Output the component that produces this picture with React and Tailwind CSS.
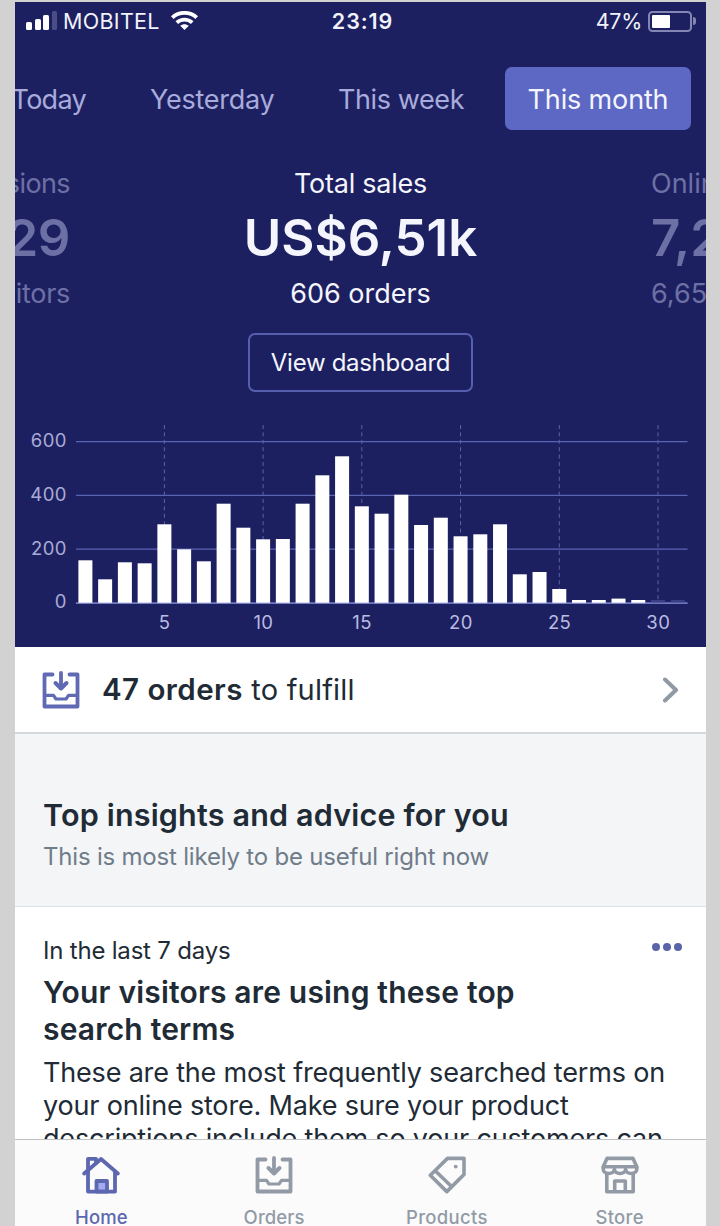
const bars = [
  560.3, 579.3, 562.3, 563.3, 524.3, 549.3, 561.3, 503.7, 527.7, 539.3, 539, 503.7, 475.3, 456.3, 506.3, 513.7,
  494.7, 525, 517.7, 536.3, 534.3, 524.3, 574.3, 572, 589, 600, 600, 598.6, 600, 600, 600,
];
const yTicks = [
  ["600", 441.6],
  ["400", 495.3],
  ["200", 549.2],
  ["0", 603],
];
const xTicks = [5, 10, 15, 20, 25, 30];
const centerX = (day) => 85.4 + (day - 1) * 19.745;

function Chart() {
  return (
    <svg className="mt-[8px] block h-[247px] w-[691px]" viewBox="15 400 691 247">
      {xTicks.map((d) => (
        <line key={d} x1={centerX(d)} x2={centerX(d)} y1="425" y2="603" stroke="#5a62ad" strokeWidth="1" strokeDasharray="4 3.4" />
      ))}
      {yTicks.map(([label, y]) => (
        <g key={label}>
          <line x1="76" x2="687.5" y1={y} y2={y} stroke="#5a64b4" strokeWidth="1.3" />
          <text x="67" y={y + 5.4} textAnchor="end" fill="#a9abd6" fontSize="18.5" letterSpacing="0.5">
            {label}
          </text>
        </g>
      ))}
      {bars.map((top, i) => (
        <rect key={i} x={centerX(i + 1) - 7} y={top} width="14" height={603.2 - top} fill={i > 28 ? "#3a3f87" : "#ffffff"} />
      ))}
      <line x1="76" x2="687.5" y1="603.2" y2="603.2" stroke="#8088cc" strokeWidth="1" />
      {xTicks.map((d) => (
        <text key={d} x={centerX(d) + 0.3} y="629" textAnchor="middle" fill="#b9bbe0" fontSize="18.5" letterSpacing="0.4">
          {d}
        </text>
      ))}
    </svg>
  );
}

function InboxIcon({ className }) {
  return (
    <svg className={className} viewBox="0 0 38 38" fill="none" stroke="currentColor" strokeWidth="3.8" strokeLinejoin="round" strokeLinecap="round">
      <path d="M10.5 3.5H2.5V35.5H35.5V3.5H27.5" />
      <path d="M2.5 24.3H11.5L14 28H24L26.5 24.3H35.5" strokeWidth="3.2" />
      <path d="M19 2V17" />
      <path d="M13.5 12L19 17.5L24.5 12" strokeWidth="4" />
    </svg>
  );
}

function HomeIcon() {
  return (
    <svg className="h-[38px] w-[38px]" viewBox="0 0 38 38" fill="none" stroke="currentColor" strokeWidth="3.8" strokeLinejoin="round" strokeLinecap="round">
      <path d="M6 16.5V2.8H14V7" />
      <path d="M2.2 17.5L19 3L35.8 17.5" />
      <path d="M6 15.5V35.6H33V15.5" />
      <path d="M14.5 35.5V25H25V35.5Z" fill="#a3aaf0" />
    </svg>
  );
}

function TagIcon() {
  return (
    <svg className="h-[38px] w-[38px]" viewBox="0 0 38 38" fill="none" stroke="currentColor" strokeWidth="3.6" strokeLinejoin="round">
      <path d="M19.5 2.4H36V18.5L18.8 35.6L2.3 19.3Z" />
      <path d="M7.2 14.7L23.8 30.7" />
      <circle cx="27.7" cy="10.6" r="1.9" fill="currentColor" stroke="none" />
    </svg>
  );
}

function StoreIcon() {
  return (
    <svg className="h-[38px] w-[38px]" viewBox="0 0 38 38" fill="none" stroke="currentColor" strokeWidth="3.6" strokeLinejoin="round">
      <path d="M6 2.4H32L35.8 10.8H2.2Z" />
      <path d="M2.2 10.8V13C2.2 19 13.4 19 13.4 13C13.4 19 24.6 19 24.6 13C24.6 19 35.8 19 35.8 13V10.8" />
      <path d="M5.8 17V35.8H32.2V17" />
      <path d="M13.7 35.8V25H24.3V35.8" />
    </svg>
  );
}

function WifiIcon() {
  return (
    <svg className="-mt-[2px] h-[19px] w-[27px]" viewBox="0 0 27 19" fill="none" stroke="#fff" strokeWidth="3.9">
      <path d="M1.3 6.6C8.2 .3 18.8 .3 25.7 6.6" />
      <path d="M5.8 11.6C10.2 7.6 16.8 7.6 21.2 11.6" />
      <path d="M13.5 19L9.2 14.8C11.7 12.7 15.3 12.7 17.8 14.8Z" fill="#fff" stroke="none" />
    </svg>
  );
}

function StatusBar() {
  return (
    <div className="grid h-[39px] grid-cols-[1fr_auto_1fr] items-center text-[21.5px] leading-none text-[#f1f2fa]">
      <div className="flex items-center pl-[11px]">
        <div className="-mt-[2px] flex h-[19px] items-end gap-[2.5px]">
          <i className="h-[8px] w-[6px] rounded-[1.5px] bg-white" />
          <i className="h-[11px] w-[6px] rounded-[1.5px] bg-white" />
          <i className="h-[15px] w-[6px] rounded-[1.5px] bg-white" />
          <i className="h-[19px] w-[5px] rounded-[1.5px] bg-[#4b4e85]" />
        </div>
        <span className="ml-[6.5px] mr-[11px] tracking-[0.3px]">MOBITEL</span>
        <WifiIcon />
      </div>
      <span className="pl-[4px] font-semibold tracking-[0.9px]">23:19</span>
      <div className="flex items-center justify-end pr-[10px]">
        <span className="mr-[6px] tracking-[-0.3px]">47%</span>
        <div className="-mt-[1px] h-[21px] w-[44px] rounded-[4.5px] border-2 border-[#8386b4] p-[2px]">
          <div className="h-full w-[18px] rounded-[1px] bg-white" />
        </div>
        <i className="-mt-[1px] ml-[1px] h-[8px] w-[3px] rounded-r-full bg-[#8386b4]" />
      </div>
    </div>
  );
}

function NavItem({ label, active, children, className }) {
  return (
    <div className={"flex flex-col items-center pt-[16px] " + (active ? "text-[#5c67b0]" : "text-[#929ba5]")}>
      {children}
      <span className={"mt-[12px] text-[18.5px] font-medium leading-[22px] " + className}>{label}</span>
    </div>
  );
}

export default function App() {
  return (
    <div className="h-[1226px] w-[720px] overflow-hidden bg-[#d2d2d2] pl-[15px] pt-[2px] font-['Inter',sans-serif]">
      <main className="flex h-[1224px] w-[691px] flex-col overflow-hidden bg-white">
        <section className="h-[645px] shrink-0 overflow-hidden bg-[#1d2060]">
          <StatusBar />
          <nav className="mt-[26px] grid h-[63px] grid-cols-[71px_252px_167px_186px] items-center whitespace-nowrap text-[27px] text-[#a8abdb]">
            <span className="flex justify-end pt-[3px] tracking-[-0.7px]">Today</span>
            <span className="pl-[64px] pt-[3px] tracking-[-0.25px]">Yesterday</span>
            <span className="pt-[3px] tracking-[-0.4px]">This week</span>
            <span className="flex h-[63px] items-center justify-center rounded-[7px] bg-[#5c68c3] pt-[3px] tracking-[-0.15px] text-[#f4f5fd]">This month</span>
          </nav>
          <div className="mt-[35px] grid grid-cols-[55px_1fr_55px] whitespace-nowrap text-[27px] text-[#f4f5fd]">
            <div className="flex flex-col items-end text-[#6d70a5]">
              <span className="leading-[38px] tracking-[-0.6px]">Sessions</span>
              <span className="text-[51px] font-semibold leading-[69px] tracking-[-0.5px]">8,629</span>
              <span className="leading-[43px] tracking-[-0.3px]">visitors</span>
            </div>
            <div className="flex flex-col items-center">
              <span className="leading-[38px] tracking-[-0.25px]">Total sales</span>
              <span className="text-[51px] font-semibold leading-[69px]">US$6,51k</span>
              <span className="leading-[43px]">606 orders</span>
              <button className="mt-[18px] h-[59px] w-[225px] rounded-[7px] border-2 border-[#555fae] text-[24px] tracking-[-0.3px]">View dashboard</button>
            </div>
            <div className="flex flex-col items-start text-[#6d70a5]">
              <span className="leading-[38px]">Online store</span>
              <span className="text-[51px] font-semibold leading-[69px]">7,25</span>
              <span className="leading-[43px]">6,65</span>
            </div>
          </div>
          <Chart />
        </section>
        <section className="flex h-[85px] shrink-0 items-center pl-[27px] pr-[27px] text-[29px] text-[#212b36]">
          <InboxIcon className="h-[38px] w-[38px] text-[#6069b3]" />
          <p className="ml-[22px] flex-1 tracking-[0.2px]">
            <b className="text-[29.5px] font-semibold tracking-[0.45px]">47 orders</b> to fulfill
          </p>
          <svg className="h-[26px] w-[17px]" viewBox="0 0 17 26" fill="none" stroke="#919aa3" strokeWidth="4" strokeLinecap="round" strokeLinejoin="round">
            <path d="M3 2.5L14 13L3 23.5" />
          </svg>
        </section>
        <section className="h-[175px] shrink-0 border-b border-t-2 border-b-[#dde0e4] border-t-[#d5d8dc] bg-[#f3f5f7] pl-[28px] pt-[61px]">
          <h2 className="text-[30.5px] font-semibold leading-[40px] tracking-[0.18px] text-[#212b36]">Top insights and advice for you</h2>
          <p className="mt-[2px] text-[24px] leading-[40px] tracking-[-0.2px] text-[#6f7c89]">This is most likely to be useful right now</p>
        </section>
        <section className="h-[232px] shrink-0 overflow-hidden whitespace-nowrap pl-[28px] pr-[24px] pt-[27px] text-[#212b36]">
          <div className="flex h-[34px] justify-between">
            <span className="text-[24px] leading-[34px] tracking-[-0.2px]">In the last 7 days</span>
            <svg className="mt-[9px] h-[8px] w-[30px]" viewBox="0 0 30 8" fill="#5a65a8">
              <circle cx="4" cy="4" r="4" />
              <circle cx="15" cy="4" r="4" />
              <circle cx="26" cy="4" r="4" />
            </svg>
          </div>
          <h3 className="mt-[6px] text-[30px] font-semibold leading-[37px] tracking-[0.18px]">
            Your visitors are using these top
            <br />
            search terms
          </h3>
          <p className="mt-[8px] text-[27px] leading-[33px] tracking-[-0.18px]">
            These are the most frequently searched terms on
            <br />
            your online store. Make sure your product
            <br />
            descriptions include them so your customers can
          </p>
        </section>
        <nav className="grid h-[87px] shrink-0 grid-cols-4 overflow-hidden border-t border-[#bfc1c3] bg-[#fbfbfc]">
          <NavItem label="Home" active className="tracking-[0.1px]"><HomeIcon /></NavItem>
          <NavItem label="Orders" className="tracking-[0.1px]"><InboxIcon className="h-[38px] w-[38px]" /></NavItem>
          <NavItem label="Products" className="tracking-[0.3px]"><TagIcon /></NavItem>
          <NavItem label="Store" className="tracking-[0.3px]"><StoreIcon /></NavItem>
        </nav>
      </main>
    </div>
  );
}
